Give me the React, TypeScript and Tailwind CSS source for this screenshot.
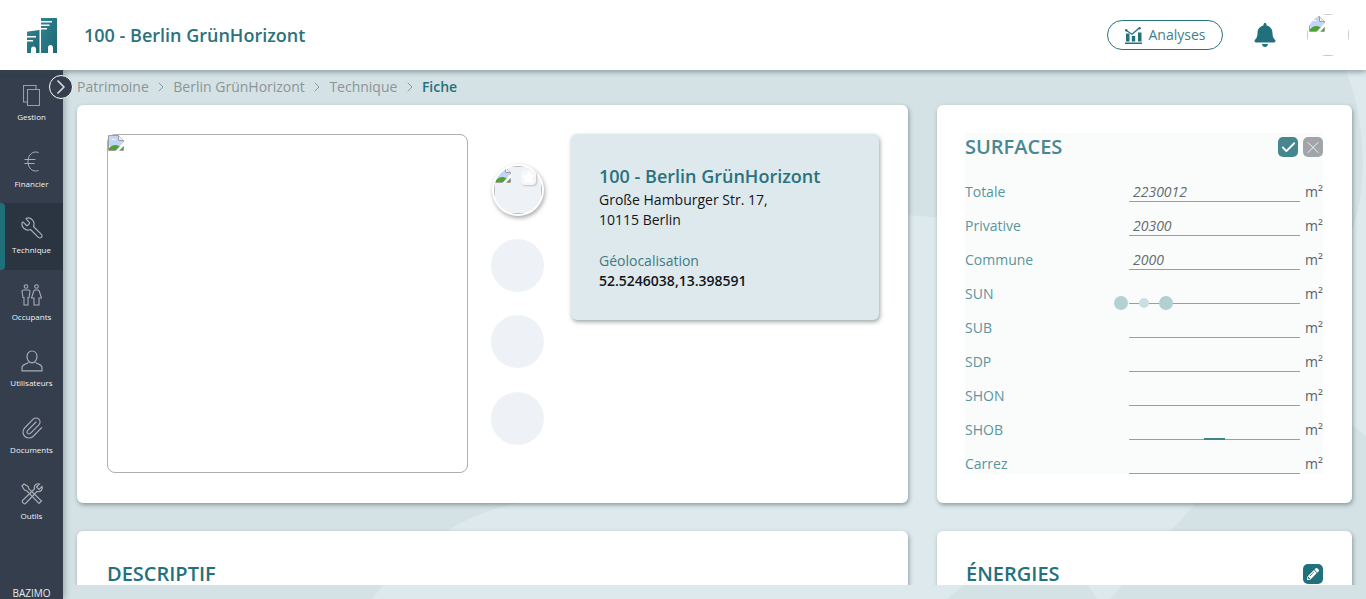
import { Check, ChevronRight, Paperclip, Star, Wrench, X } from 'lucide-react';
import { FaBell, FaPencilAlt } from 'react-icons/fa';

const surfaces = [
  { label: 'Totale', value: '2230012' },
  { label: 'Privative', value: '20300' },
  { label: 'Commune', value: '2000' },
  { label: 'SUN', value: '' },
  { label: 'SUB', value: '' },
  { label: 'SDP', value: '' },
  { label: 'SHON', value: '' },
  { label: 'SHOB', value: '' },
  { label: 'Carrez', value: '' },
];

function BrokenImage({ className }: { className?: string }) {
  return (
    <svg viewBox="0 0 16 16" className={className}>
      <path d="M0.5 0.5H10.5L15.5 5.5V15.5H0.5Z" fill="#fff" stroke="#a0a0a0" />
      <path d="M10.5 0.5V5.5H15.5" fill="#eee" stroke="#a0a0a0" />
      <path d="M1 1H10V6H15V11H1Z" fill="#c2d5f7" />
      <path d="M3 5C4 3.500 7 3.500 8 5Z" fill="#fff" />
      <path d="M1 15V13C4 10 7 9.500 9.500 10.500L15 12V15Z" fill="#4fa336" />
      <path d="M16 6.500L7.500 16H11L16 10.500Z" fill="#fff" />
    </svg>
  );
}

function Logo() {
  return (
    <svg viewBox="0 0 30 35" className="h-[35px] w-[30px]">
      <defs>
        <linearGradient id="logo-fill" x1="0" y1="0" x2="1" y2="1">
          <stop offset="0" stopColor="#2f8492" />
          <stop offset="1" stopColor="#1d6772" />
        </linearGradient>
      </defs>
      <path d="M14 0H29C29.6 0 30 0.4 30 1V35H26V30C26 28 25 27 23.5 27C22 27 21 28 21 30V35H14Z" fill="url(#logo-fill)" />
      <path d="M1 13.5L12.5 12V35H9V31C9 29.5 8 28.500 6.500 28.500C5 28.500 4 29.500 4 31V35H0V14.500C0 14 0.400 13.600 1 13.500Z" fill="url(#logo-fill)" />
      <path d="M13 3H25V4.500H13ZM13 6.500H22.500V8H13ZM13 10H20V11.500H13ZM0 18H9V19.500H0ZM0 22H6V23.500H0Z" fill="#fff" />
    </svg>
  );
}

function AnalysesIcon() {
  return (
    <svg viewBox="0 0 17 17" className="h-[17px] w-[17px]" fill="#23717d">
      <path d="M1 3.300L7 7.300L14 1.300" fill="none" stroke="#23717d" strokeWidth="1.300" />
      <circle cx="1.200" cy="3.300" r="1.200" />
      <circle cx="14.500" cy="1.300" r="1.200" />
      <path d="M1 6.500H4.500V14.500H1ZM6.800 9H10.200V14.500H6.800ZM13 5.500H16.500V14.500H13ZM0 15.500H17V17H0Z" />
    </svg>
  );
}

function GestionIcon() {
  return (
    <svg viewBox="0 0 17 21" className="h-[21px] w-[17px]" fill="none" stroke="#9aa0a8" strokeWidth="1.100">
      <path d="M13 4V0.500H0.500V17H4" />
      <path d="M4.500 4.500H16.500V20.500H4.500Z" />
    </svg>
  );
}

function EuroIcon() {
  return (
    <svg viewBox="0 0 15 21" className="h-[21px] w-[15px]" fill="none" stroke="#a7adb5" strokeWidth="1">
      <path d="M14.500 1.500C9 -0.500 4 3.500 4 10.500C4 17.500 9 21.500 14.500 19.500" />
      <path d="M0.500 8.500H11.500M0.500 12.500H10.500" />
    </svg>
  );
}

function OccupantsIcon() {
  return (
    <svg viewBox="0 0 21 22" className="h-[22px] w-[21px]" fill="none" stroke="#a7adb5" strokeWidth="1.100">
      <circle cx="5" cy="2.500" r="1.800" />
      <path d="M2.500 6H7.500C8.500 6 9 6.800 9 7.500L8 13.500H7V21H3V13.500H2L1 7.500C1 6.800 1.500 6 2.500 6Z" />
      <circle cx="15.500" cy="2.500" r="1.800" />
      <path d="M14 6H17C17.800 6 18 6.500 18.200 7L20.500 14H18V21H13V14H10.500L12.800 7C13 6.500 13.200 6 14 6Z" />
    </svg>
  );
}

function UserIcon() {
  return (
    <svg viewBox="0 0 22 22" className="h-[22px] w-[22px]" fill="none" stroke="#a7adb5" strokeWidth="1.200">
      <path d="M11 1C14 1 16 3.300 16 6.500C16 9.500 13.800 12.800 11 12.800C8.200 12.800 6 9.500 6 6.500C6 3.300 8 1 11 1Z" />
      <path d="M7.500 12.500C4.500 14.500 1 14.500 1 17.500V20.800H21V17.500C21 14.500 17.500 14.500 14.500 12.500" />
    </svg>
  );
}

function ToolsIcon() {
  return (
    <svg viewBox="0 0 22 22" className="h-[22px] w-[22px]" fill="none" stroke="#a7adb5" strokeWidth="1.200">
      <path d="M1 3L3 1L7 3.500L8 6L20.500 18L18 20.500L6 8L3.500 7Z" />
      <path d="M21 3.500L18 6.500L15.500 4L18.500 1C15.500 0 12.500 2.500 13.500 6L1.500 17.500C0.500 19 3 21.500 4.500 20.500L16 8.500C19.500 9.500 22 6.500 21 3.500Z" />
    </svg>
  );
}

function SidebarItem({ label, active, children }: { label: string; active?: boolean; children: React.ReactNode }) {
  return (
    <div className={`relative flex h-[66.5px] flex-col items-center ${active ? 'bg-[#2b3542]' : ''}`}>
      {active && <div className="absolute bottom-0 left-0 top-0 w-[5px] rounded-r-sm bg-[#1f7079]" />}
      <div className="mt-[13px] flex h-[24px] items-center justify-center">{children}</div>
      <div className="mt-[3px] text-[8px] font-medium leading-[14px] text-[#eef2f6]">{label}</div>
    </div>
  );
}

function Sidebar() {
  return (
    <aside className="relative z-10 flex w-[63px] shrink-0 flex-col bg-[#343e4d] shadow-[2px_0_6px_rgba(0,0,0,0.25)]">
      <SidebarItem label="Gestion"><GestionIcon /></SidebarItem>
      <SidebarItem label="Financier"><EuroIcon /></SidebarItem>
      <SidebarItem label="Technique" active><Wrench size={24} strokeWidth={1.2} className="-scale-x-100 text-[#a7adb5]" /></SidebarItem>
      <SidebarItem label="Occupants"><OccupantsIcon /></SidebarItem>
      <SidebarItem label="Utilisateurs"><UserIcon /></SidebarItem>
      <SidebarItem label="Documents"><Paperclip size={24} strokeWidth={1.2} className="text-[#a7adb5]" /></SidebarItem>
      <SidebarItem label="Outils"><ToolsIcon /></SidebarItem>
      <div className="mt-auto -mb-px text-center text-[10px] leading-[14px] text-[#e6ebef]">BAZIMO</div>
      {/* bouton pour ouvrir le menu */}
      <div className="absolute left-[49px] top-[5px] flex h-[24px] w-[24px] items-center justify-center rounded-full border border-white bg-[#343e4d]">
        <ChevronRight size={24} strokeWidth={1.700} className="shrink-0 text-[#d7dbe0]" />
      </div>
    </aside>
  );
}

function Breadcrumb() {
  const parts = ['Patrimoine', 'Berlin GrünHorizont', 'Technique'];
  return (
    <div className="mb-px flex h-[34px] items-center text-sm text-[#8d9497]">
      {parts.map(part => (
        <div key={part} className="flex items-center">
          <span>{part}</span>
          <ChevronRight size={16} strokeWidth={1.200} className="mx-[4.250px] text-[#7f888c]" />
        </div>
      ))}
      <span className="font-semibold text-[#23717d]">Fiche</span>
    </div>
  );
}

function Thumb() {
  return <div className="h-[53px] w-[53px] rounded-full bg-[#eef1f6]" />;
}

function Card({ children, className }: { children: React.ReactNode; className?: string }) {
  return (
    <div className={`rounded-md bg-white shadow-[1px_2px_4px_rgba(60,80,85,0.5)] ${className ?? ''}`}>
      {children}
    </div>
  );
}

function FicheCard() {
  return (
    <Card className="flex h-[398px] pl-[30px] pt-[29px]">
      <div className="h-[339px] w-[361px] rounded-lg border border-[#aeaeae]">
        <BrokenImage className="h-4 w-4" />
      </div>
      <div className="ml-[23px] flex w-[53px] flex-col items-center">
        <div className="relative mt-[30px] h-[52px] w-[52px] rounded-full bg-white p-[2px] shadow-[1px_2px_4px_rgba(0,0,0,0.35)]">
          <div className="h-full w-full overflow-hidden rounded-full bg-[#eef1f6]">
            <div className="h-full w-full border border-[#b8b8b8]">
              <BrokenImage className="h-4 w-4" />
            </div>
          </div>
          <div className="absolute left-[29px] top-[6px] flex h-[15px] w-[15px] items-center justify-center rounded-sm bg-[#f7f7f7] shadow-[1px_1px_2px_rgba(0,0,0,0.2)]">
            <Star size={13} fill="#fff" stroke="#fff" />
          </div>
        </div>
        <div className="mt-[23px] flex flex-col gap-[23.250px]">
          <Thumb />
          <Thumb />
          <Thumb />
        </div>
      </div>
      <div className="ml-[27px] h-[186px] w-[308px] rounded-md bg-[#dde9ed] pl-[28px] pt-[29px] shadow-[1px_2px_4px_rgba(60,80,85,0.5)]">
        <div className="text-lg font-semibold leading-[27px] text-[#2a727d]">100 - Berlin GrünHorizont</div>
        <div className="text-sm leading-5 text-[#14161a]">Große Hamburger Str. 17,</div>
        <div className="text-sm leading-5 text-[#14161a]">10115 Berlin</div>
        <div className="mt-[21px] text-sm leading-5 text-[#3f7a85]">Géolocalisation</div>
        <div className="text-sm font-semibold leading-5 text-[#14161a]">52.5246038,13.398591</div>
      </div>
    </Card>
  );
}

function SurfacesCard() {
  return (
    <Card className="h-[398px] pl-[28px] pr-[29px] pt-[28px]">
      <div className="relative bg-[#fafcfb]">
        <div className="flex h-[35px] items-start justify-between">
          <h2 className="text-xl font-semibold uppercase leading-[28px] text-[#4a8792]">Surfaces</h2>
          <div className="mt-1 flex gap-[5px]">
            <div className="flex h-5 w-5 items-center justify-center rounded-[5px] bg-[#46878f]">
              <Check size={17} strokeWidth={2.500} className="text-white" />
            </div>
            <div className="flex h-5 w-5 items-center justify-center rounded-[5px] bg-[#a1a5a9]">
              <X size={21} strokeWidth={1} className="text-white" />
            </div>
          </div>
        </div>
        {surfaces.map(row => (
          <div key={row.label} className="grid h-[34px] grid-cols-[164px_171px_1fr] items-end text-sm leading-5">
            <span className="text-[#5a949d]">{row.label}</span>
            <span className="h-5 border-b border-[#9a9ea2] pl-1 italic leading-[19px] text-[#666b70]">{row.value}</span>
            <span className="pl-[5px] text-[#5c6165]">m²</span>
          </div>
        ))}
        {/* loader par dessus le formulaire */}
        <div className="absolute left-[149px] top-[163px] flex items-center gap-[10.500px]">
          <div className="h-[14px] w-[14px] rounded-full bg-[#b5d0d5]" />
          <div className="h-[10px] w-[10px] rounded-full bg-[#cbdfe2]" />
          <div className="h-[14px] w-[14px] rounded-full bg-[#b3cfd4]" />
        </div>
        <div className="absolute left-[239px] top-[305px] h-[2px] w-[21px] bg-[#3f838d]" />
      </div>
    </Card>
  );
}

export default function App() {
  return (
    <div className="relative flex h-[599px] w-[1366px] flex-col overflow-hidden bg-[#d4e2e5] font-['Open_Sans',sans-serif]">
      {/* formes du fond */}
      <svg viewBox="0 0 1366 599" className="absolute inset-0 h-[599px] w-[1366px]">
        <path
          d="M1345 70H1366V437Q1358 427 1350 426Q1300 420 1255 437L1110 599H1097L1088 585L1060 535H1000L964 585L947 599H372L383 585L447 531Q480 510 520 503L700 400L908 215C1100 230 1300 300 1351 233C1372 180 1362 105 1345 70Z"
          fill="#dde9ed"
        />
      </svg>

      <header className="relative z-20 flex h-[70px] shrink-0 items-center bg-white pl-[27px] pr-[17px] shadow-[0_2px_5px_rgba(50,70,75,0.45)]">
        <Logo />
        <h1 className="ml-[27px] text-lg font-semibold text-[#2a727d]">100 - Berlin GrünHorizont</h1>
        <div className="ml-auto flex h-[30px] w-[116px] items-center justify-center gap-[7px] rounded-full border border-[#2a7480] text-sm text-[#3f808b]">
          <AnalysesIcon />
          Analyses
        </div>
        <FaBell className="ml-[30px] text-[24px] text-[#21707c]" />
        <div className="ml-[30px] h-[42px] w-[42px] overflow-hidden rounded-full">
          <div className="h-full w-full border border-[#c4c4c4] pl-px pt-px">
            <BrokenImage className="h-4 w-4" />
          </div>
        </div>
      </header>

      <div className="relative flex min-h-0 flex-1">
        <Sidebar />
        <main className="min-w-0 flex-1 pb-[14px]">
          <div className="h-full overflow-hidden pl-[14px] pr-[14px]">
            <Breadcrumb />
            <div className="grid grid-cols-[831px_415px] gap-x-[29px] gap-y-[28px]">
              <FicheCard />
              <SurfacesCard />
              <Card className="h-[120px] pl-[30px] pt-[28px]">
                <h2 className="text-xl font-semibold uppercase leading-[30px] text-[#23717d]">Descriptif</h2>
              </Card>
              <Card className="h-[120px] pl-[29px] pr-[29px] pt-[28px]">
                <div className="flex items-center justify-between">
                  <h2 className="text-xl font-semibold uppercase leading-[30px] text-[#23717d]">Énergies</h2>
                  <div className="flex h-5 w-5 items-center justify-center rounded-[5px] bg-[#21717c]">
                    <FaPencilAlt className="text-[12px] text-white" />
                  </div>
                </div>
              </Card>
            </div>
          </div>
        </main>
      </div>
    </div>
  );
}
